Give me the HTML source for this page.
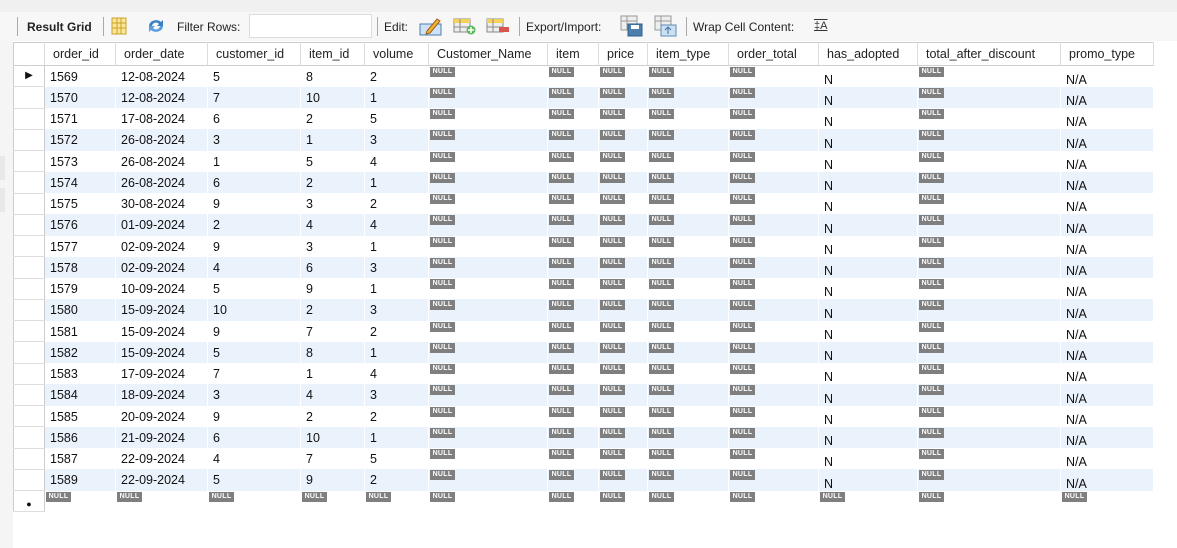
<!DOCTYPE html>
<html><head><meta charset="utf-8"><style>
body{margin:0;width:1177px;height:548px;background:#fff;font-family:Tahoma,"Liberation Sans",sans-serif;font-size:12.5px;color:#111;position:relative;overflow:hidden}
.top{position:absolute;left:0;top:0;width:1177px;height:12px;background:#f0f0f0}
.tb{position:absolute;left:0;top:12px;width:1177px;height:29px;background:#f7f7f7;}
.tb span{position:absolute;top:8px;font-size:12px;color:#222}
.sep{position:absolute;top:5px;width:1px;height:19px;background:#aaa}
.side{position:absolute;left:0;top:41px;width:13px;height:507px;background:#f5f5f5}
table{position:absolute;left:13px;top:42px;border-collapse:collapse;table-layout:fixed;width:1140px}
th{height:23px;box-sizing:border-box;background:#fff;font-weight:normal;text-align:left;padding:0 0 0 8px;border-right:1px solid #ddd;border-bottom:1px solid #cfcfcf;border-top:1px solid #ccc;color:#222;white-space:nowrap;overflow:hidden;line-height:14px}
tr{height:21.26px}
td{height:21.26px;box-sizing:border-box;padding:1px 0 0 5px;line-height:14px;border-right:1px solid #fff;position:relative;vertical-align:middle;white-space:nowrap;overflow:hidden}
tr.b td{background:#eaf2fc}
td.r{background:#fff!important;border-right:1px solid #ccc;border-left:1px solid #ccc;border-bottom:1px solid #ddd;padding:0;text-align:center}
i{position:absolute;left:1px;top:1px;width:25px;height:10px;background:#7f7f7f;color:#fff;font-style:normal;font-size:7px;font-weight:bold;line-height:10px;text-align:center;letter-spacing:.3px}
td.v{vertical-align:bottom;padding-bottom:0}
</style></head><body>
<div class="top"></div>
<div class="tb">
<div class="sep" style="left:17px"></div>
<span style="left:27px;font-weight:bold;color:#222">Result Grid</span>
<div class="sep" style="left:103px"></div>
<svg style="position:absolute;left:111px;top:5px" width="16" height="18"><rect x="1" y="1" width="14" height="16" fill="#fbe79a" stroke="#c9a227"/><line x1="6" y1="1" x2="6" y2="17" stroke="#c9a227"/><line x1="10" y1="1" x2="10" y2="17" stroke="#c9a227"/><line x1="1" y1="6" x2="15" y2="6" stroke="#c9a227"/><line x1="1" y1="11" x2="15" y2="11" stroke="#c9a227"/></svg>
<svg style="position:absolute;left:146px;top:5px" width="20" height="18"><path d="M3 9a7 6 0 0 1 12-4l2-2v6h-6l2-2a4 4 0 0 0-7 2z" fill="#3b7fc4"/><path d="M17 9a7 6 0 0 1-12 4l-2 2v-6h6l-2 2a4 4 0 0 0 7-2z" fill="#5aa0e0"/></svg>
<span style="left:177px">Filter Rows:</span>
<div style="position:absolute;left:249px;top:2px;width:121px;height:22px;background:#fff;border:1px solid #ddd"></div>
<div class="sep" style="left:377px"></div>
<span style="left:384px">Edit:</span>
<svg style="position:absolute;left:419px;top:4px" width="24" height="20"><rect x="1" y="8" width="21" height="11" fill="#cfe1f5" stroke="#4a7fb5"/><path d="M8 15l10-12 3 2-10 12-4 1z" fill="#f0b040" stroke="#a06010"/></svg>
<svg style="position:absolute;left:453px;top:5px" width="24" height="18"><rect x="1" y="2" width="16" height="13" fill="#eee" stroke="#888"/><rect x="1" y="2" width="16" height="4" fill="#f5d35a"/><line x1="1" y1="10" x2="17" y2="10" stroke="#888"/><line x1="7" y1="2" x2="7" y2="15" stroke="#888"/><circle cx="18" cy="13" r="4.5" fill="#5cb85c"/><path d="M18 10v6M15 13h6" stroke="#fff" stroke-width="1.5"/></svg>
<svg style="position:absolute;left:486px;top:5px" width="24" height="18"><rect x="1" y="2" width="16" height="13" fill="#eee" stroke="#888"/><rect x="1" y="2" width="16" height="4" fill="#f5d35a"/><line x1="1" y1="10" x2="17" y2="10" stroke="#888"/><line x1="7" y1="2" x2="7" y2="15" stroke="#888"/><rect x="13" y="10" width="10" height="5" fill="#d9534f"/></svg>
<div class="sep" style="left:519px"></div>
<span style="left:526px">Export/Import:</span>
<svg style="position:absolute;left:620px;top:3px" width="24" height="22"><rect x="1" y="1" width="16" height="14" fill="#eee" stroke="#999"/><line x1="1" y1="6" x2="17" y2="6" stroke="#999"/><line x1="7" y1="1" x2="7" y2="15" stroke="#999"/><rect x="8" y="9" width="14" height="12" fill="#4d7fae" stroke="#2d5f8e"/><rect x="11" y="10" width="8" height="4" fill="#fff"/></svg>
<svg style="position:absolute;left:654px;top:3px" width="24" height="22"><rect x="1" y="1" width="16" height="14" fill="#eee" stroke="#999"/><line x1="1" y1="6" x2="17" y2="6" stroke="#999"/><line x1="7" y1="1" x2="7" y2="15" stroke="#999"/><rect x="7" y="10" width="15" height="11" fill="#cde0f2" stroke="#5a8ab8"/><path d="M14 19v-6M11 15l3-3 3 3" stroke="#3a6ea0" fill="none"/></svg>
<div class="sep" style="left:686px"></div>
<span style="left:693px">Wrap Cell Content:</span>
<span style="left:814px;font-size:11px;text-decoration:underline overline;color:#333">‡A</span>
</div>
<div class="side"></div>
<div style="position:absolute;left:0;top:156px;width:5px;height:24px;background:#e8e8e8"></div>
<div style="position:absolute;left:0;top:188px;width:5px;height:24px;background:#e8e8e8"></div>
<table>
<colgroup><col style="width:31px"><col style="width:71px"><col style="width:92px"><col style="width:93px"><col style="width:64px"><col style="width:64px"><col style="width:119px"><col style="width:51px"><col style="width:49px"><col style="width:81px"><col style="width:90px"><col style="width:99px"><col style="width:143px"><col style="width:93px"></colgroup>
<tr style="height:23px"><th style="border-left:1px solid #ccc"></th><th>order_id</th><th>order_date</th><th>customer_id</th><th>item_id</th><th>volume</th><th>Customer_Name</th><th>item</th><th>price</th><th>item_type</th><th>order_total</th><th>has_adopted</th><th>total_after_discount</th><th>promo_type</th></tr>
<tr><td class="r" style="font-size:10px">&#9654;</td><td>1569</td><td>12-08-2024</td><td>5</td><td>8</td><td>2</td><td><i>NULL</i></td><td><i>NULL</i></td><td><i>NULL</i></td><td><i>NULL</i></td><td><i>NULL</i></td><td class="v">N</td><td><i>NULL</i></td><td class="v">N/A</td></tr>
<tr class="b"><td class="r"></td><td>1570</td><td>12-08-2024</td><td>7</td><td>10</td><td>1</td><td><i>NULL</i></td><td><i>NULL</i></td><td><i>NULL</i></td><td><i>NULL</i></td><td><i>NULL</i></td><td class="v">N</td><td><i>NULL</i></td><td class="v">N/A</td></tr>
<tr><td class="r"></td><td>1571</td><td>17-08-2024</td><td>6</td><td>2</td><td>5</td><td><i>NULL</i></td><td><i>NULL</i></td><td><i>NULL</i></td><td><i>NULL</i></td><td><i>NULL</i></td><td class="v">N</td><td><i>NULL</i></td><td class="v">N/A</td></tr>
<tr class="b"><td class="r"></td><td>1572</td><td>26-08-2024</td><td>3</td><td>1</td><td>3</td><td><i>NULL</i></td><td><i>NULL</i></td><td><i>NULL</i></td><td><i>NULL</i></td><td><i>NULL</i></td><td class="v">N</td><td><i>NULL</i></td><td class="v">N/A</td></tr>
<tr><td class="r"></td><td>1573</td><td>26-08-2024</td><td>1</td><td>5</td><td>4</td><td><i>NULL</i></td><td><i>NULL</i></td><td><i>NULL</i></td><td><i>NULL</i></td><td><i>NULL</i></td><td class="v">N</td><td><i>NULL</i></td><td class="v">N/A</td></tr>
<tr class="b"><td class="r"></td><td>1574</td><td>26-08-2024</td><td>6</td><td>2</td><td>1</td><td><i>NULL</i></td><td><i>NULL</i></td><td><i>NULL</i></td><td><i>NULL</i></td><td><i>NULL</i></td><td class="v">N</td><td><i>NULL</i></td><td class="v">N/A</td></tr>
<tr><td class="r"></td><td>1575</td><td>30-08-2024</td><td>9</td><td>3</td><td>2</td><td><i>NULL</i></td><td><i>NULL</i></td><td><i>NULL</i></td><td><i>NULL</i></td><td><i>NULL</i></td><td class="v">N</td><td><i>NULL</i></td><td class="v">N/A</td></tr>
<tr class="b"><td class="r"></td><td>1576</td><td>01-09-2024</td><td>2</td><td>4</td><td>4</td><td><i>NULL</i></td><td><i>NULL</i></td><td><i>NULL</i></td><td><i>NULL</i></td><td><i>NULL</i></td><td class="v">N</td><td><i>NULL</i></td><td class="v">N/A</td></tr>
<tr><td class="r"></td><td>1577</td><td>02-09-2024</td><td>9</td><td>3</td><td>1</td><td><i>NULL</i></td><td><i>NULL</i></td><td><i>NULL</i></td><td><i>NULL</i></td><td><i>NULL</i></td><td class="v">N</td><td><i>NULL</i></td><td class="v">N/A</td></tr>
<tr class="b"><td class="r"></td><td>1578</td><td>02-09-2024</td><td>4</td><td>6</td><td>3</td><td><i>NULL</i></td><td><i>NULL</i></td><td><i>NULL</i></td><td><i>NULL</i></td><td><i>NULL</i></td><td class="v">N</td><td><i>NULL</i></td><td class="v">N/A</td></tr>
<tr><td class="r"></td><td>1579</td><td>10-09-2024</td><td>5</td><td>9</td><td>1</td><td><i>NULL</i></td><td><i>NULL</i></td><td><i>NULL</i></td><td><i>NULL</i></td><td><i>NULL</i></td><td class="v">N</td><td><i>NULL</i></td><td class="v">N/A</td></tr>
<tr class="b"><td class="r"></td><td>1580</td><td>15-09-2024</td><td>10</td><td>2</td><td>3</td><td><i>NULL</i></td><td><i>NULL</i></td><td><i>NULL</i></td><td><i>NULL</i></td><td><i>NULL</i></td><td class="v">N</td><td><i>NULL</i></td><td class="v">N/A</td></tr>
<tr><td class="r"></td><td>1581</td><td>15-09-2024</td><td>9</td><td>7</td><td>2</td><td><i>NULL</i></td><td><i>NULL</i></td><td><i>NULL</i></td><td><i>NULL</i></td><td><i>NULL</i></td><td class="v">N</td><td><i>NULL</i></td><td class="v">N/A</td></tr>
<tr class="b"><td class="r"></td><td>1582</td><td>15-09-2024</td><td>5</td><td>8</td><td>1</td><td><i>NULL</i></td><td><i>NULL</i></td><td><i>NULL</i></td><td><i>NULL</i></td><td><i>NULL</i></td><td class="v">N</td><td><i>NULL</i></td><td class="v">N/A</td></tr>
<tr><td class="r"></td><td>1583</td><td>17-09-2024</td><td>7</td><td>1</td><td>4</td><td><i>NULL</i></td><td><i>NULL</i></td><td><i>NULL</i></td><td><i>NULL</i></td><td><i>NULL</i></td><td class="v">N</td><td><i>NULL</i></td><td class="v">N/A</td></tr>
<tr class="b"><td class="r"></td><td>1584</td><td>18-09-2024</td><td>3</td><td>4</td><td>3</td><td><i>NULL</i></td><td><i>NULL</i></td><td><i>NULL</i></td><td><i>NULL</i></td><td><i>NULL</i></td><td class="v">N</td><td><i>NULL</i></td><td class="v">N/A</td></tr>
<tr><td class="r"></td><td>1585</td><td>20-09-2024</td><td>9</td><td>2</td><td>2</td><td><i>NULL</i></td><td><i>NULL</i></td><td><i>NULL</i></td><td><i>NULL</i></td><td><i>NULL</i></td><td class="v">N</td><td><i>NULL</i></td><td class="v">N/A</td></tr>
<tr class="b"><td class="r"></td><td>1586</td><td>21-09-2024</td><td>6</td><td>10</td><td>1</td><td><i>NULL</i></td><td><i>NULL</i></td><td><i>NULL</i></td><td><i>NULL</i></td><td><i>NULL</i></td><td class="v">N</td><td><i>NULL</i></td><td class="v">N/A</td></tr>
<tr><td class="r"></td><td>1587</td><td>22-09-2024</td><td>4</td><td>7</td><td>5</td><td><i>NULL</i></td><td><i>NULL</i></td><td><i>NULL</i></td><td><i>NULL</i></td><td><i>NULL</i></td><td class="v">N</td><td><i>NULL</i></td><td class="v">N/A</td></tr>
<tr class="b"><td class="r"></td><td>1589</td><td>22-09-2024</td><td>5</td><td>9</td><td>2</td><td><i>NULL</i></td><td><i>NULL</i></td><td><i>NULL</i></td><td><i>NULL</i></td><td><i>NULL</i></td><td class="v">N</td><td><i>NULL</i></td><td class="v">N/A</td></tr>
<tr><td class="r" style="font-size:9px;padding-top:6px">&#9679;</td><td><i>NULL</i></td><td><i>NULL</i></td><td><i>NULL</i></td><td><i>NULL</i></td><td><i>NULL</i></td><td><i>NULL</i></td><td><i>NULL</i></td><td><i>NULL</i></td><td><i>NULL</i></td><td><i>NULL</i></td><td><i>NULL</i></td><td><i>NULL</i></td><td><i>NULL</i></td></tr>
</table>
</body></html>
